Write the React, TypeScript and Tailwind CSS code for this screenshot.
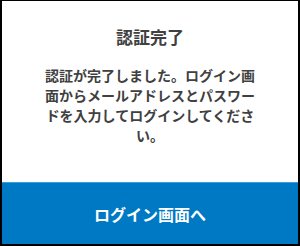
export default function App() {
  return (
    <div
      className="w-[300px] h-[246px] bg-white border-t border-l-2 border-r-2 border-b-2 border-black flex flex-col"
      style={{ fontFamily: '"Noto Sans CJK JP", "Noto Sans", sans-serif' }}
    >
      <div className="flex-1 flex flex-col items-center pt-[24px] px-[41px] text-[#404040]">
        <h2 className="text-[17px] leading-[24px] font-bold">認証完了</h2>
        <p className="mt-[16px] text-[14px] leading-[20px] font-bold text-center">
          認証が完了しました。ログイン画面からメールアドレスとパスワードを入力してログインしてください。
        </p>
      </div>
      <button className="h-[62px] w-full bg-[#0079c5] border-t border-[#3a9ede] text-white text-[16px] font-bold">
        ログイン画面へ
      </button>
    </div>
  )
}
